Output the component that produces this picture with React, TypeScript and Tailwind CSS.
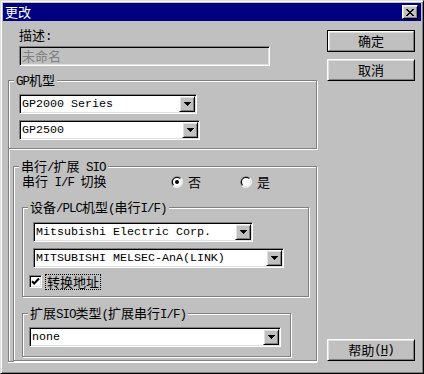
import React from 'react'

const etched = 'border border-[#808080] shadow-[inset_1px_1px_0_#fff,1px_1px_0_#fff]'
const sunken =
  'border border-t-[#808080] border-l-[#808080] border-r-white border-b-white shadow-[inset_1px_1px_0_#000,inset_-1px_-1px_0_#dfdfdf]'
const raised =
  'border border-t-white border-l-white border-r-black border-b-black shadow-[inset_1px_1px_0_#dfdfdf,inset_-1px_-1px_0_#808080]'
const mono = "font-['Liberation_Mono',monospace] text-[11.67px]"

// half-width latin inside the CJK labels
const M: React.FC<{ children: React.ReactNode }> = ({ children }) => (
  <span className="font-['Liberation_Mono',monospace] text-[12.5px] tracking-[-1px] whitespace-pre">{children}</span>
)

interface GroupBoxProps {
  label: React.ReactNode
  className: string
  children?: React.ReactNode
}

const GroupBox: React.FC<GroupBoxProps> = ({ label, className, children }) => (
  <div className={`relative ${etched} ${className}`}>
    <span className="absolute -top-[9px] left-[5px] bg-[#c0c0c0] px-[2px] h-[16px] leading-[16px] whitespace-nowrap">{label}</span>
    {children}
  </div>
)

const Arrow = () => (
  <svg width="7" height="4" viewBox="0 0 7 4" shapeRendering="crispEdges">
    <path d="M0 0h7L3.5 4z" fill="#000" />
  </svg>
)

const Combo: React.FC<{ value: string; className: string }> = ({ value, className }) => (
  <div className={`flex h-[20px] p-[1px] bg-white ${sunken} ${className}`}>
    <span className={`flex-1 pl-[1px] leading-[16px] whitespace-nowrap overflow-hidden ${mono}`}>{value}</span>
    <div className={`w-[16px] h-[16px] bg-[#c0c0c0] flex items-center justify-center ${raised}`}>
      <Arrow />
    </div>
  </div>
)

const Radio: React.FC<{ checked?: boolean }> = ({ checked }) => (
  <svg width="12" height="12" viewBox="0 0 12 12">
    <path d="M10.24 1.76A6 6 0 0 0 1.76 10.24Z" fill="#808080" />
    <path d="M1.76 10.24A6 6 0 0 0 10.24 1.76Z" fill="#fff" />
    <path d="M9.54 2.46A5 5 0 0 0 2.46 9.54Z" fill="#000" />
    <path d="M2.46 9.54A5 5 0 0 0 9.54 2.46Z" fill="#dfdfdf" />
    <circle cx="6" cy="6" r="4" fill="#fff" />
    {checked && <circle cx="6" cy="6" r="2" fill="#000" />}
  </svg>
)

const PushButton: React.FC<{ children: React.ReactNode; isDefault?: boolean; className?: string }> = ({
  children,
  isDefault,
  className = '',
}) =>
  isDefault ? (
    <div className={`h-[22px] border border-black ${className}`}>
      <div className="h-full flex items-center justify-center border border-t-white border-l-white border-r-[#808080] border-b-[#808080] shadow-[inset_1px_1px_0_#dfdfdf] leading-[16px]">
        {children}
      </div>
    </div>
  ) : (
    <div className={`h-[22px] flex items-center justify-center leading-[16px] ${raised} ${className}`}>{children}</div>
  )

export default function App() {
  return (
    <div className="w-[424px] h-[374px] bg-[#c0c0c0] border border-t-[#dfdfdf] border-l-[#dfdfdf] border-r-black border-b-black shadow-[inset_1px_1px_0_#fff,inset_-1px_-1px_0_#808080] p-[2px] flex flex-col font-['Noto_Sans_CJK_SC',sans-serif] text-[13px] text-black">
      {/* title bar */}
      <div className="h-[18px] bg-[#000080] flex items-center justify-between pl-[2px] pr-[3px]">
        <span className="text-white leading-[16px]">更改</span>
        <div className={`w-[16px] h-[14px] bg-[#c0c0c0] flex items-center justify-center ${raised}`}>
          <svg width="8" height="7" viewBox="0 0 8 7" shapeRendering="crispEdges">
            <path d="M0 0h2l2 2.5L6 0h2L5 3.5 8 7H6L4 4.5 2 7H0l3-3.5z" fill="#000" />
          </svg>
        </div>
      </div>

      <div className="flex flex-1">
        {/* left column */}
        <div className="ml-[5px] w-[309px] flex flex-col">
          <div className="ml-[11px] mt-[6px] h-[16px] leading-[16px]">
            描述<M>:</M>
          </div>
          <div className={`ml-[11px] mt-[3px] w-[251px] h-[20px] pl-[2px] text-[#808080] leading-[18px] ${sunken}`}>
            未命名
          </div>

          <GroupBox
            label={
              <>
                <M>GP</M>机型
              </>
            }
            className="mt-[14px] h-[69px]"
          >
            <div className="flex flex-col ml-[10px] mt-[13px] gap-[6px]">
              <Combo value="GP2000 Series" className="w-[178px]" />
              <Combo value="GP2500" className="w-[181px]" />
            </div>
          </GroupBox>

          <div className="h-[213px] border-l border-b border-[#808080] shadow-[inset_1px_0_0_#fff,0_1px_0_#fff]">
            <GroupBox
              label={
                <>
                  串行<M>/</M>扩展<M> SIO</M>
                </>
              }
              className="ml-[4px] mt-[17px] w-[304px] h-[195px]"
            >
              <div className="mt-[7px] h-[16px] flex items-center leading-[16px]">
                <span className="w-[157px] pl-[8px] whitespace-nowrap">
                  串行<M> I/F </M>切换
                </span>
                <label className="w-[69px] flex items-center gap-[5px]">
                  <Radio checked />
                  <span>否</span>
                </label>
                <label className="flex items-center gap-[5px]">
                  <Radio />
                  <span>是</span>
                </label>
              </div>

              <GroupBox
                label={
                  <>
                    设备<M>/PLC</M>机型<M>(</M>串行<M>I/F)</M>
                  </>
                }
                className="ml-[8px] mt-[17px] w-[287px] h-[90px]"
              >
                <div className="flex flex-col ml-[10px] mt-[14px] gap-[6px]">
                  <Combo value="Mitsubishi Electric Corp." className="w-[220px]" />
                  <Combo value="MITSUBISHI MELSEC-AnA(LINK)" className="w-[251px]" />
                </div>
                <div className="mt-[6px] ml-[6px] flex items-start h-[16px]">
                  <div className={`mt-[1px] w-[13px] h-[13px] bg-white flex items-center justify-center ${sunken}`}>
                    <svg width="9" height="9" viewBox="0 0 9 9">
                      <path d="M1 4.2l2.2 2.3L8 1.5" fill="none" stroke="#000" strokeWidth="2" />
                    </svg>
                  </div>
                  <span className="ml-[3px] h-[16px] border border-dotted border-black leading-[14px] px-[1px]">转换地址</span>
                </div>
              </GroupBox>

              <GroupBox
                label={
                  <>
                    扩展<M>SIO</M>类型<M>(</M>扩展串行<M>I/F)</M>
                  </>
                }
                className="ml-[8px] mt-[16px] w-[269px] h-[44px]"
              >
                <Combo value="none" className="ml-[6px] mt-[13px] w-[252px]" />
              </GroupBox>
            </GroupBox>
          </div>
        </div>

        {/* right column */}
        <div className="ml-[10px] w-[88px] flex flex-col pt-[9px] pb-[10px]">
          <PushButton isDefault>确定</PushButton>
          <PushButton className="mt-[7px]">取消</PushButton>
          <PushButton className="mt-auto">
            帮助<M>(</M>
            <span className="underline">
              <M>H</M>
            </span>
            <M>)</M>
          </PushButton>
        </div>
      </div>
    </div>
  )
}
